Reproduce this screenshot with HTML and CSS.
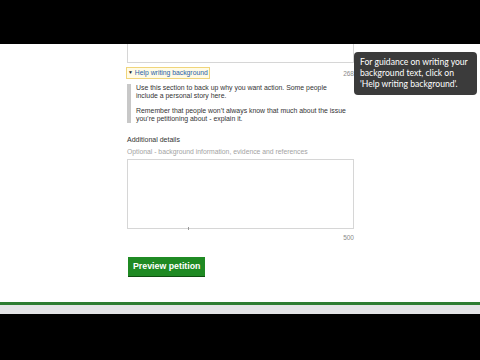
FILE: index.html
```html
<!DOCTYPE html>
<html>
<head>
<meta charset="utf-8">
<link rel="stylesheet" href="styles.css">
</head>
<body>
<div class="topbar"></div>
<div class="main">
  <div class="ta ta1"></div>
  <div class="help-row">
    <span class="summary"><span class="arrow">▼</span> Help writing background</span>
    <span class="count">268</span>
  </div>
  <div class="guidance">
    <p>Use this section to back up why you want action. Some people include a personal story here.</p>
    <p>Remember that people won’t always know that much about the issue you’re petitioning about - explain it.</p>
  </div>
  <div class="label">Additional details</div>
  <div class="hint">Optional - background information, evidence and references</div>
  <div class="ta ta2"><span class="grip"></span></div>
  <div class="count count2">500</div>
  <div class="btn">Preview petition</div>
</div>
<div class="footer">
  <div class="green"></div>
  <div class="grey"></div>
  <div class="black"></div>
</div>
<div class="tooltip">For guidance on writing your background text, click on 'Help writing background'.</div>
</body>
</html>
```

FILE: styles.css
```css
html, body { margin: 0; padding: 0; }
body {
  width: 480px; height: 360px; overflow: hidden;
  display: flex; flex-direction: column;
  background: #fff;
  font-family: "Liberation Sans", Arial, sans-serif;
  color: #333;
  position: relative;
}
.topbar { height: 44px; background: #000; flex: none; }
.main { flex: 1; padding-left: 127px; width: 227px; display: flex; flex-direction: column; }
.ta { border: 1px solid #d6d6d6; box-sizing: border-box; }
.ta1 { height: 19px; border-top: none; }
.help-row { display: flex; justify-content: space-between; align-items: center; margin-top: 5px; height: 10px; }
.summary {
  font-size: 6.8px; color: #2b5fa8; line-height: 9px;
  outline: 1px solid #f0d57a; background: #fffbe6; padding: 0 1px 0 1px;
}
.arrow { color: #222; font-size: 5px; position: relative; top: -1px; }
.count { font-size: 6.5px; color: #8a8a8a; }
.guidance { margin-top: 6px; border-left: 4px solid #c8c8c8; padding-left: 5px; padding-right: 5px; font-size: 6.9px; line-height: 8px; color: #333; }
.guidance p { margin: 0 0 7px 0; }
.guidance p:last-child { margin-bottom: 0; }
.label { font-size: 7px; color: #333; margin-top: 13px; line-height: 8px; }
.hint { font-size: 6.8px; color: #a3a3a3; margin-top: 4px; line-height: 8px; }
.ta2 { height: 70px; margin-top: 3px; position: relative; }
.grip { position: absolute; left: 60px; bottom: -2px; width: 1px; height: 3px; background: #999; }
.count2 { text-align: right; margin-top: 5px; line-height: 8px; }
.btn {
  align-self: flex-start; margin-top: 15px; margin-left: 1px;
  background: #1f8a23; color: #fff; font-weight: bold; font-size: 8.8px;
  padding: 0 5px; height: 19px; line-height: 19px; box-shadow: 0 1px 0 #0e4f10;
}
.footer { flex: none; }
.green { height: 3px; background: #2e7d32; }
.grey { height: 9px; background: #e4e4e6; }
.black { height: 46px; background: #000; }
.tooltip {
  position: absolute; left: 354px; top: 52px; width: 123px; height: 43px; box-sizing: border-box;
  background: #3b3b3b; border-radius: 4px; color: #fff;
  font-family: Lato, "Open Sans", sans-serif; font-size: 8.6px; line-height: 11px;
  padding: 5px 4px 0 6px;
}
```
